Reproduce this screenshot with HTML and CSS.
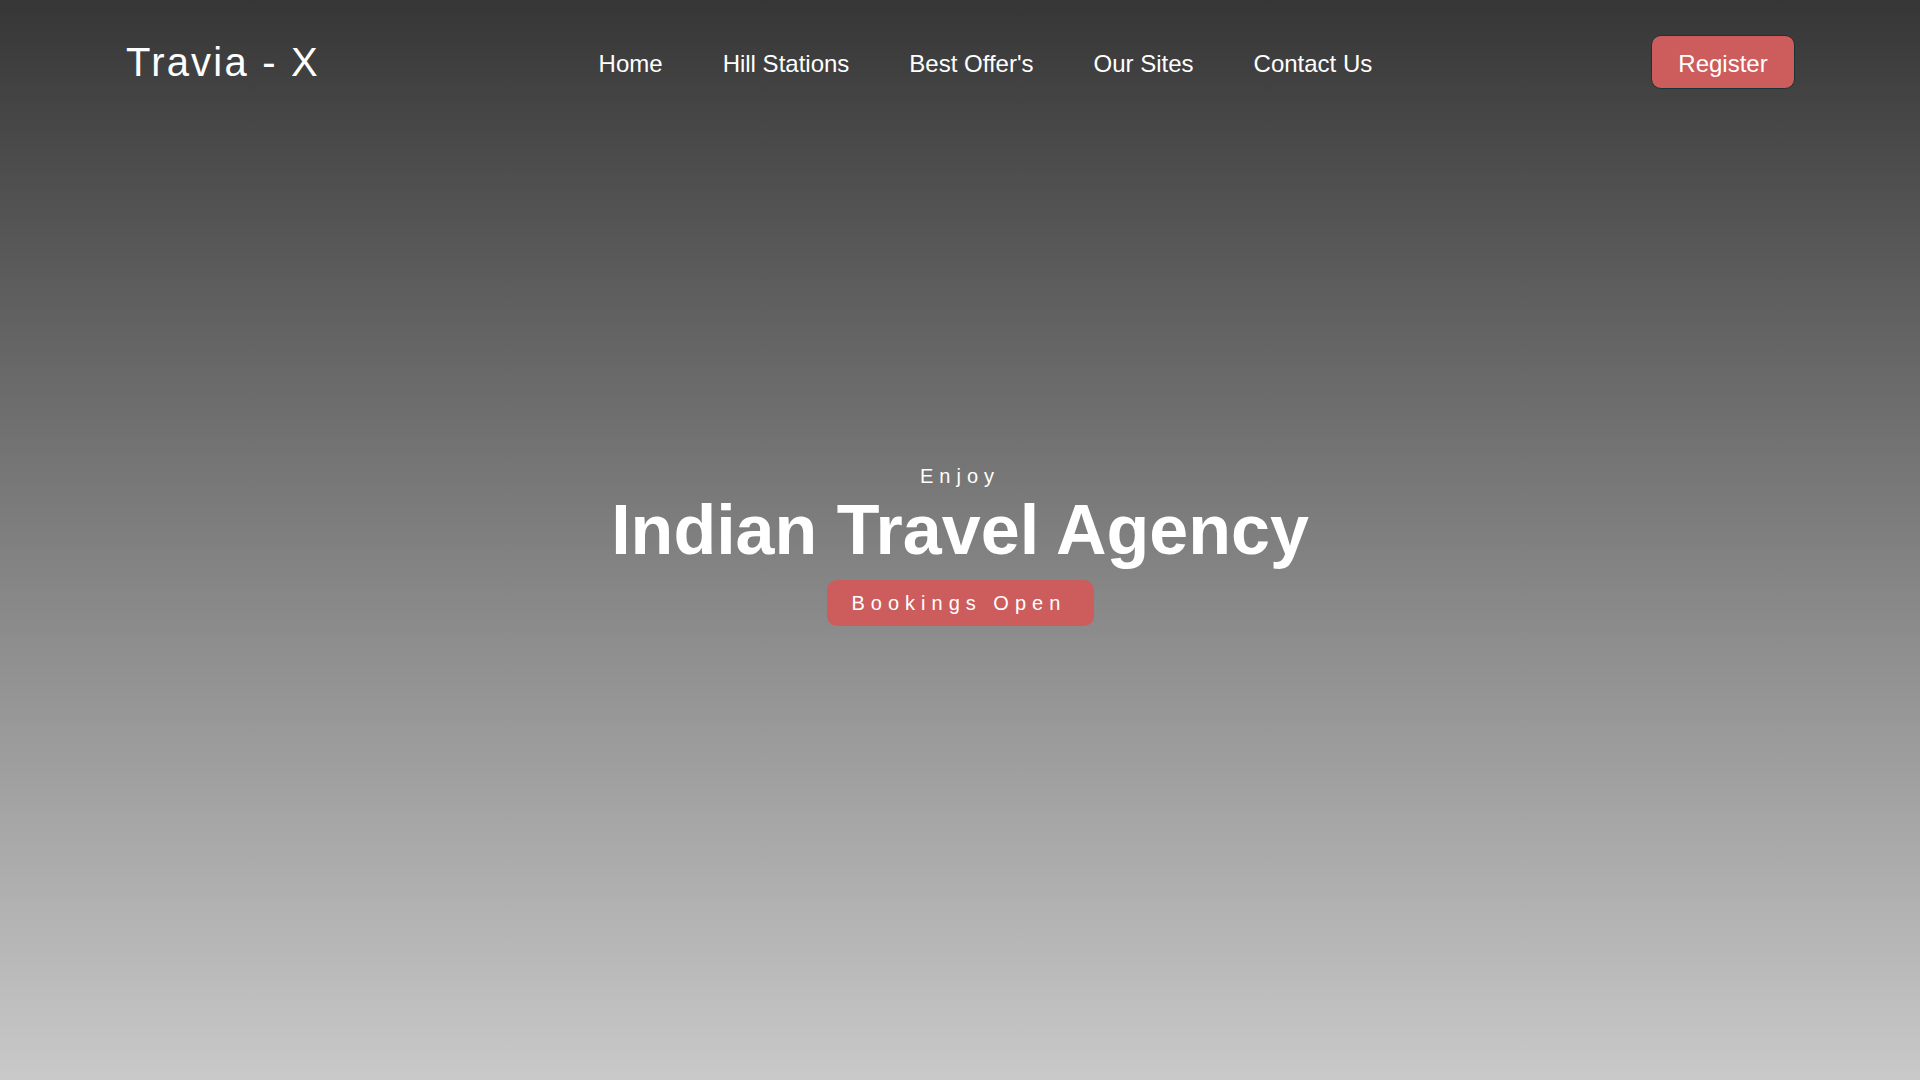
FILE: index.html
```html
<!DOCTYPE html>
<html lang="en">
<head>
<meta charset="utf-8">
<title>Travia - X</title>
<link rel="stylesheet" href="styles.css">
</head>
<body>
<div class="page">
  <header class="topbar">
    <div class="logo">Travia - X</div>
    <nav class="nav">
      <a href="#" class="nav-link">Home</a>
      <a href="#" class="nav-link">Hill Stations</a>
      <a href="#" class="nav-link">Best Offer's</a>
      <a href="#" class="nav-link">Our Sites</a>
      <a href="#" class="nav-link">Contact Us</a>
    </nav>
    <button class="register">Register</button>
  </header>
  <section class="hero">
    <p class="hero-sub">Enjoy</p>
    <h1 class="hero-title">Indian Travel Agency</h1>
    <button class="hero-btn">Bookings Open</button>
  </section>
</div>
</body>
</html>
```

FILE: styles.css
```css
* { box-sizing: border-box; }
html, body { margin: 0; padding: 0; }
body {
  font-family: "Liberation Sans", Arial, sans-serif;
  color: #fff;
}
.page {
  min-height: 100vh;
  display: flex;
  flex-direction: column;
  background: linear-gradient(to bottom, #363636 0%, #c9c9c9 100%);
}
.topbar {
  display: flex;
  align-items: center;
  justify-content: space-between;
  padding: 35px 125px 36px 126px;
}
.logo {
  font-size: 40px;
  letter-spacing: 2.2px;
  line-height: 46px;
}
.nav {
  display: flex;
  gap: 60px;
  padding-top: 3px;
}
.nav-link {
  color: #fff;
  text-decoration: none;
  font-size: 24px;
  line-height: 28px;
}
.register {
  font-family: "Liberation Sans", Arial, sans-serif;
  background: #cd5c5c;
  color: #fff;
  font-size: 24px;
  line-height: 28px;
  padding: 13px 25px 10px;
  border: 1px solid #1c3434;
  border-radius: 10px;
  height: 54px;
  width: 144px;
}
.hero {
  flex: 1;
  display: flex;
  flex-direction: column;
  align-items: center;
  padding-top: 340px;
}
.hero-sub {
  margin: 0;
  font-size: 20px;
  line-height: 23px;
  letter-spacing: 6px;
}
.hero-title {
  margin: 2px 0 0;
  font-size: 70px;
  line-height: 80px;
  font-weight: bold;
}
.hero-btn {
  margin-top: 10px;
  font-family: "Liberation Sans", Arial, sans-serif;
  background: #cd5c5c;
  color: #fff;
  border: none;
  border-radius: 10px;
  font-size: 20px;
  line-height: 23px;
  letter-spacing: 6px;
  text-align: left;
  padding: 12px 0 11px 25px;
  height: 46px;
  width: 267px;
}
```
